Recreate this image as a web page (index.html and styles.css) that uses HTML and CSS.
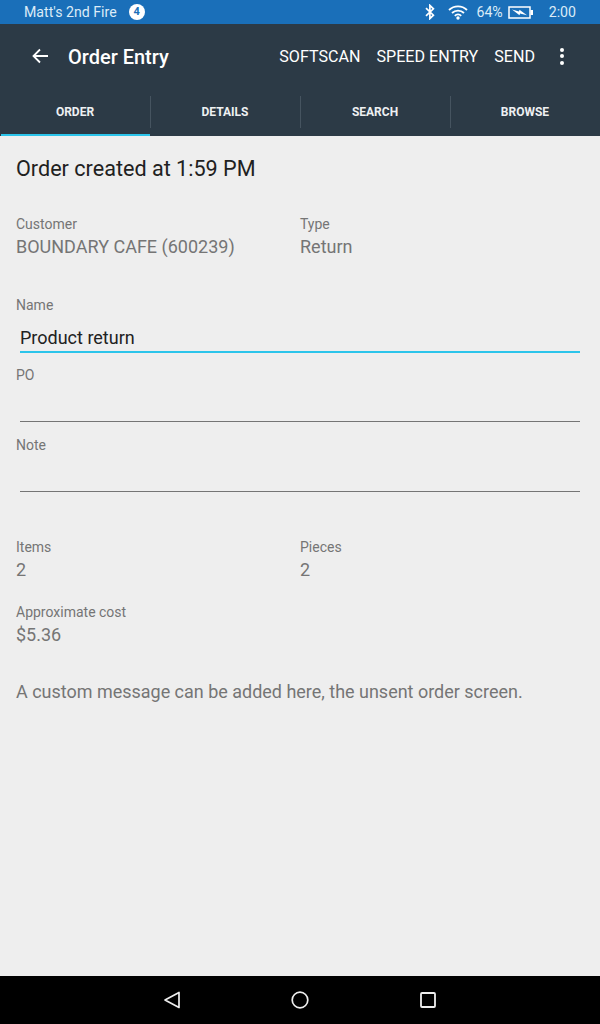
FILE: index.html
```html
<!DOCTYPE html>
<html lang="en">

<head>
    <meta charset="UTF-8">
    <meta name="viewport" content="width=device-width, initial-scale=1.0">
    <title>Order Entry</title>
    <link rel="stylesheet" href="styles.css">
</head>

<body>
    <div class="status-bar">
        <span class="device-name">Matt's 2nd Fire</span>
        <span class="notif-badge">4</span>
        <span class="status-right">
            <svg class="bt-icon" width="10" height="16" viewBox="0 0 10 16"><path d="M1 4.2 L8.4 11.2 L4.9 14.6 V1.4 L8.4 4.8 L1 11.8" fill="none" stroke="#fff" stroke-width="1.7"/></svg>
            <svg class="wifi-icon" width="20" height="15" viewBox="0 0 20 15">
                <path d="M1 5 A13 13 0 0 1 19 5" fill="none" stroke="#fff" stroke-width="1.8"/>
                <path d="M4 8 A8.6 8.6 0 0 1 16 8" fill="none" stroke="#fff" stroke-width="1.8"/>
                <path d="M6.8 10.8 A4.5 4.5 0 0 1 13.2 10.8" fill="none" stroke="#fff" stroke-width="1.8"/>
                <circle cx="10" cy="13" r="1.7" fill="#fff"/>
            </svg>
            <span class="battery-pct">64%</span>
            <svg class="battery-icon" width="25" height="13" viewBox="0 0 25 13">
                <rect x="1" y="1" width="21" height="11" fill="none" stroke="#fff" stroke-width="1.5"/>
                <rect x="22.5" y="4" width="2.5" height="5" fill="#fff"/>
                <path d="M4 3.6 L11 5.6 L11.5 3.8 L19 9.2 L12 7.4 L11.5 9.2 Z" fill="#fff"/>
            </svg>
            <span class="clock">2:00</span>
        </span>
    </div>

    <div class="app-bar">
        <svg class="back-icon" width="16" height="16" viewBox="0 0 16 16"><path d="M16 8 H1.5 M8 1.5 L1.5 8 L8 14.5" fill="none" stroke="#fff" stroke-width="1.8"/></svg>
        <span class="app-title">Order Entry</span>
        <div class="app-actions">
            <span>SOFTSCAN</span>
            <span>SPEED ENTRY</span>
            <span>SEND</span>
        </div>
        <div class="more-dots"><i></i><i></i><i></i></div>
    </div>

    <div class="tabs">
        <div class="tab active">ORDER</div>
        <div class="tab">DETAILS</div>
        <div class="tab">SEARCH</div>
        <div class="tab">BROWSE</div>
    </div>

    <div class="content">
        <h1 class="order-title">Order created at 1:59 PM</h1>

        <div class="two-col info-top">
            <div>
                <div class="label">Customer</div>
                <div class="value">BOUNDARY CAFE (600239)</div>
            </div>
            <div>
                <div class="label">Type</div>
                <div class="value">Return</div>
            </div>
        </div>

        <div class="field first-field">
            <div class="label">Name</div>
            <div class="input focused">Product return</div>
        </div>
        <div class="field">
            <div class="label">PO</div>
            <div class="input"></div>
        </div>
        <div class="field">
            <div class="label">Note</div>
            <div class="input"></div>
        </div>

        <div class="two-col info-totals">
            <div>
                <div class="label">Items</div>
                <div class="value">2</div>
            </div>
            <div>
                <div class="label">Pieces</div>
                <div class="value">2</div>
            </div>
        </div>

        <div class="cost">
            <div class="label">Approximate cost</div>
            <div class="value">$5.36</div>
        </div>

        <p class="custom-msg">A custom message can be added here, the unsent order screen.</p>
    </div>

    <div class="nav-bar">
        <svg width="18" height="18" viewBox="0 0 18 18"><path d="M16 1.5 V16.5 L2 9 Z" fill="none" stroke="#eee" stroke-width="1.7" stroke-linejoin="round"/></svg>
        <svg width="18" height="18" viewBox="0 0 18 18"><circle cx="9" cy="9" r="7.8" fill="none" stroke="#eee" stroke-width="1.7"/></svg>
        <svg width="18" height="18" viewBox="0 0 18 18"><rect x="2" y="2" width="14" height="14" rx="1" fill="none" stroke="#eee" stroke-width="1.8"/></svg>
    </div>
</body>

</html>
```

FILE: styles.css
```css
* {
    box-sizing: border-box;
}

body {
    font-family: Roboto, sans-serif;
    margin: 0;
    width: 600px;
    height: 1024px;
    display: flex;
    flex-direction: column;
    background-color: #eeeeee;
    overflow: hidden;
}

.status-bar {
    height: 24px;
    flex: none;
    display: flex;
    align-items: center;
    padding-left: 24px;
    padding-right: 24px;
    background-color: #1a6fb9;
    color: #dcebf7;
    font-size: 14.15px;
}

.notif-badge {
    width: 16px;
    height: 16px;
    margin-left: 12px;
    border-radius: 50%;
    background-color: #fff;
    color: #1a6fb9;
    font-size: 11px;
    font-weight: 700;
    line-height: 16px;
    text-align: center;
}

.status-right {
    margin-left: auto;
    display: flex;
    align-items: center;
}

.wifi-icon {
    margin-left: 13px;
}

.battery-pct {
    margin-left: 8px;
}

.battery-icon {
    margin-left: 5px;
}

.clock {
    margin-left: 16px;
}

.app-bar {
    height: 64px;
    flex: none;
    display: flex;
    align-items: center;
    padding-left: 32px;
    background-color: #2c3a46;
    color: #fff;
}

.app-title {
    margin-left: 20px;
    padding-top: 2px;
    font-size: 20px;
    font-weight: 500;
}

.app-actions {
    margin-left: auto;
    display: flex;
    gap: 16px;
    font-size: 16.1px;
}

.more-dots {
    width: 4px;
    margin-left: 25px;
    margin-right: 36px;
    display: flex;
    flex-direction: column;
    gap: 2.5px;
}

.more-dots i {
    width: 4px;
    height: 4px;
    border-radius: 50%;
    background-color: #fff;
}

.tabs {
    height: 48px;
    flex: none;
    display: flex;
    background-color: #2c3a46;
}

.tab {
    position: relative;
    flex: 1;
    display: flex;
    align-items: center;
    justify-content: center;
    color: #eef0f2;
    font-size: 12px;
    font-weight: 700;
}

.tab + .tab::before {
    content: "";
    position: absolute;
    left: 0;
    top: 8px;
    height: 32px;
    width: 1px;
    background-color: #465460;
}

.tab.active::after {
    content: "";
    position: absolute;
    left: 1px;
    right: 0;
    bottom: 0;
    height: 2px;
    background-color: #2bc4ea;
}

.content {
    flex: 1;
    padding: 17px 16px 0;
}

.order-title {
    margin: 0;
    color: #212121;
    font-size: 21.6px;
    font-weight: 400;
    line-height: 32px;
}

.two-col {
    display: grid;
    grid-template-columns: 284px 1fr;
}

.info-top {
    margin-top: 31px;
}

.label {
    color: #757575;
    font-size: 14px;
    line-height: 16px;
}

.value {
    color: #757575;
    font-size: 18px;
    line-height: 24px;
    margin-top: 3px;
}

.first-field {
    margin-top: 38px;
}

.field {
    height: 70px;
}

.input {
    height: 32px;
    margin: 7px 4px 0;
    padding-top: 5px;
    border-bottom: 1px solid #757575;
    color: #212121;
    font-size: 18px;
    line-height: 26px;
}

.input.focused {
    border-bottom: 2px solid #2bc4ea;
    height: 33px;
}

.info-totals {
    margin-top: 32px;
}

.cost {
    margin-top: 22px;
}

.custom-msg {
    margin: 33px 0 0;
    color: #757575;
    font-size: 17.98px;
    line-height: 24px;
}

.nav-bar {
    height: 48px;
    flex: none;
    display: flex;
    align-items: center;
    justify-content: center;
    gap: 110px;
    background-color: #000;
}
```
